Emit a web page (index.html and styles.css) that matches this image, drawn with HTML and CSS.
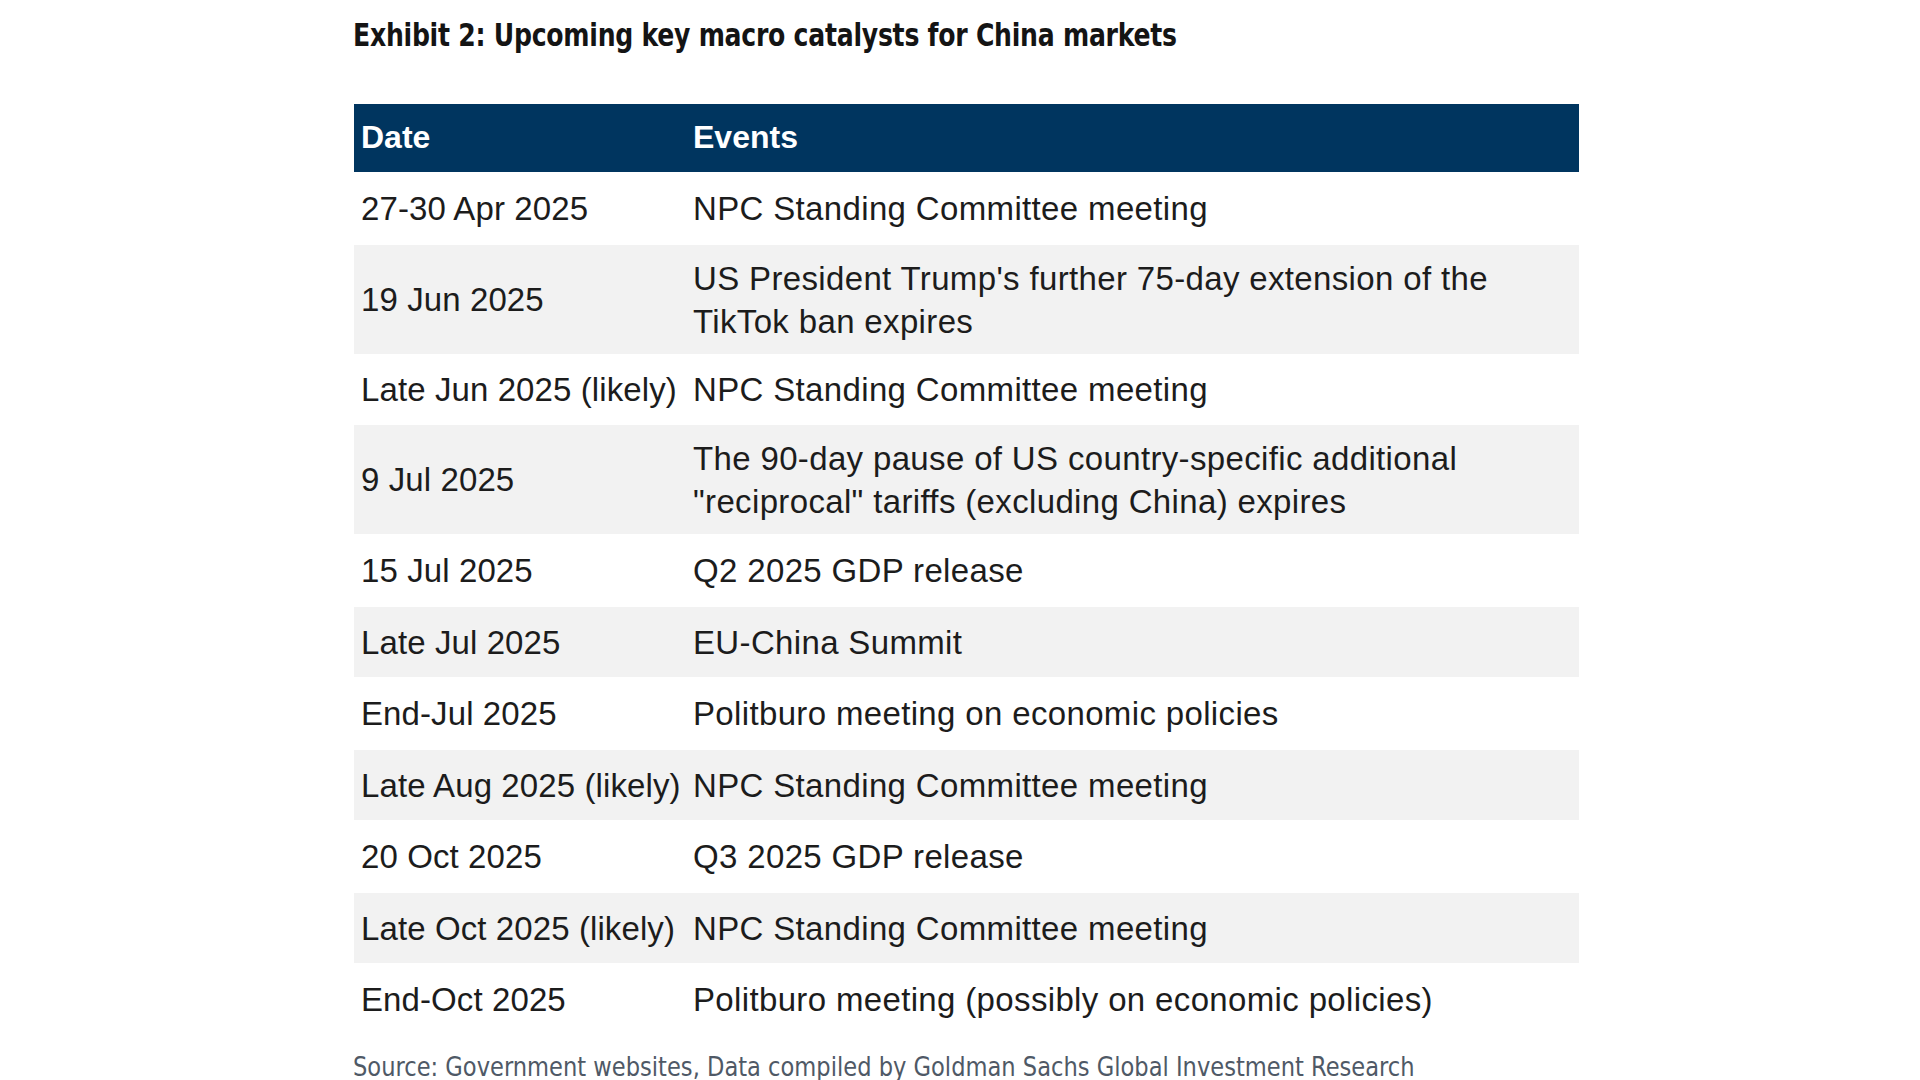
FILE: index.html
```html
<!DOCTYPE html>
<html lang="en">
<head>
<meta charset="utf-8">
<title>Exhibit 2: Upcoming key macro catalysts for China markets</title>
<link rel="stylesheet" href="styles.css">
</head>
<body>
<main class="page">
  <h1 class="title">Exhibit 2: Upcoming key macro catalysts for China markets</h1>
  <div class="table">
    <div class="row head"><div class="cell">Date</div><div class="cell">Events</div></div>
    <div class="row r1"><div class="cell date">27-30 Apr 2025</div><div class="cell">NPC Standing Committee meeting</div></div>
    <div class="row alt tall"><div class="cell date">19 Jun 2025</div><div class="cell">US President Trump's further 75-day extension of the<br>TikTok ban expires</div></div>
    <div class="row r3"><div class="cell date">Late Jun 2025 (likely)</div><div class="cell">NPC Standing Committee meeting</div></div>
    <div class="row alt tall"><div class="cell date">9 Jul 2025</div><div class="cell">The 90-day pause of US country-specific additional<br>"reciprocal" tariffs (excluding China) expires</div></div>
    <div class="row"><div class="cell date">15 Jul 2025</div><div class="cell">Q2 2025 GDP release</div></div>
    <div class="row alt"><div class="cell date">Late Jul 2025</div><div class="cell">EU-China Summit</div></div>
    <div class="row"><div class="cell date">End-Jul 2025</div><div class="cell">Politburo meeting on economic policies</div></div>
    <div class="row alt"><div class="cell date">Late Aug 2025 (likely)</div><div class="cell">NPC Standing Committee meeting</div></div>
    <div class="row"><div class="cell date">20 Oct 2025</div><div class="cell">Q3 2025 GDP release</div></div>
    <div class="row alt"><div class="cell date">Late Oct 2025 (likely)</div><div class="cell">NPC Standing Committee meeting</div></div>
    <div class="row"><div class="cell date">End-Oct 2025</div><div class="cell">Politburo meeting (possibly on economic policies)</div></div>
  </div>
  <p class="source">Source: Government websites, Data compiled by Goldman Sachs Global Investment Research</p>
</main>
</body>
</html>
```
FILE: styles.css
```css
html, body {
  margin: 0;
  padding: 0;
  background: #ffffff;
}

body {
  overflow: hidden;
  height: 1080px;
}

.page {
  padding: 16px 0 0 353px;
  width: 1227px;
}

.title {
  margin: 0;
  font-family: "Liberation Sans Narrow", "DejaVu Sans Condensed", "Liberation Sans", sans-serif;
  font-weight: 700;
  font-size: 32.5px;
  line-height: 38px;
  color: #141414;
  letter-spacing: -0.3px;
  white-space: nowrap;
  transform: scaleX(0.86);
  transform-origin: left center;
}

.table {
  margin-top: 50px;
  margin-left: 1px;
  width: 1225px;
  font-family: "Liberation Sans", Arial, sans-serif;
  font-size: 33px;
  line-height: 43px;
  color: #1c1c1c;
  letter-spacing: 0.35px;
}

.row {
  display: grid;
  grid-template-columns: 332px 1fr;
  align-items: center;
  padding: 15px 0;
  background: #ffffff;
}

.row.alt {
  background: #f2f2f2;
  padding: 13.5px 0;
}

.row.tall {
  padding: 11.5px 0;
}

.row.r1 {
  padding: 15px 0 15px;
}

.row.r3 {
  padding: 14px 0;
}

.row.head {
  background: #00355f;
  color: #ffffff;
  font-weight: 700;
  font-size: 32px;
  letter-spacing: 0;
  padding: 12px 0 13px;
}

.cell {
  padding-left: 7px;
  white-space: nowrap;
}

.cell.date {
  letter-spacing: 0.1px;
}

.source {
  margin: 14px 0 0;
  font-family: "Liberation Sans Narrow", "DejaVu Sans Condensed", "Liberation Sans", sans-serif;
  font-size: 27px;
  line-height: 34px;
  color: #4f5966;
  white-space: nowrap;
  transform: scaleX(0.93);
  transform-origin: left center;
}
```
